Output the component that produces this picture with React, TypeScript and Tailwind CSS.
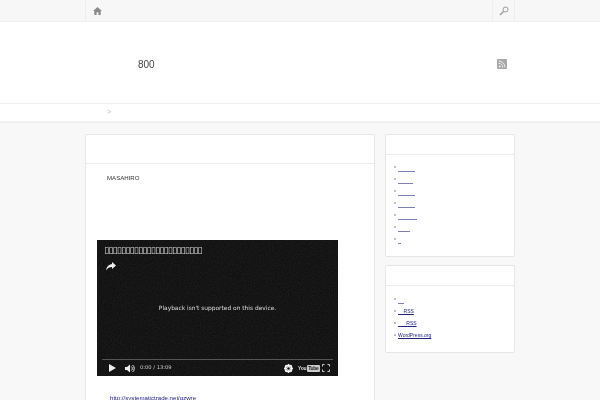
import React from "react";

const Blank = ({ w }: { w: number }) => (
  <a className="inline-block h-[9px] border-b border-[#8080b0]" style={{ width: w }} />
);

const Bullet = () => <span className="mr-[2px] mb-[4px] inline-block h-[2px] w-[2px] rounded-full bg-[#aaa]" />;

export default function App() {
  return (
    <div className="h-[400px] w-[600px] overflow-hidden bg-[#f8f8f8] font-['Liberation_Sans',Arial,sans-serif] text-[#333] blur-[0.3px]">
      <div className="h-[22px] border-b border-[#efefef] bg-[#f7f7f7]">
        <div className="mx-[85px] flex h-[21px] items-center justify-between border-l border-[#eeeeee]">
          <div className="flex w-[22px] justify-center">
            <svg width="9" height="8" viewBox="0 0 10 9" fill="#8a8a8a">
              <path d="M5 0 L10 4.5 L8.6 4.5 L8.6 9 L6 9 L6 6 L4 6 L4 9 L1.4 9 L1.4 4.5 L0 4.5 Z" />
            </svg>
          </div>
          <div className="flex h-full w-[23px] items-center justify-center border-x border-[#eeeeee]">
            <svg width="10" height="10" viewBox="0 0 10 10" fill="none" stroke="#9a9a9a">
              <circle cx="6.5" cy="3.5" r="2.5" strokeWidth="1" />
              <path d="M4.5 5.5 L1 9" strokeWidth="1.4" />
            </svg>
          </div>
        </div>
      </div>

      <header className="flex h-[81px] items-center justify-between bg-white pl-[138px] pr-[93px] pt-[3px]">
        <span className="text-[10px] text-[#444]">800</span>
        <svg width="10" height="10" viewBox="0 0 10 10">
          <rect width="10" height="10" rx="1" fill="#a8a8a8" />
          <circle cx="2.6" cy="7.4" r="1" fill="#eee" />
          <path d="M1.6 4.2 A4.2 4.2 0 0 1 5.8 8.4 M1.6 2 A6.4 6.4 0 0 1 8 8.4" stroke="#eee" strokeWidth="1" fill="none" />
        </svg>
      </header>

      <nav className="flex h-[19px] items-center border-y border-[#f1f1f1] bg-white pl-[107px] text-[7px] text-[#bbb]">
        &gt;
      </nav>

      <div className="flex items-start gap-[10px] border-t border-[#f0f0f0] px-[85px] pt-[11px]">
        <main className="h-[300px] w-[290px] shrink-0 rounded-t-[2px] border border-[#e6e6e6] bg-white">
          <div className="h-[29px] border-b border-[#eeeeee]" />
          <div className="px-[11px]">
            <p className="pl-[10px] pt-[10px] text-[6.1px] leading-[8px] text-[#333]">MASAHIRO</p>
            <div className="relative mt-[58px] h-[136px] w-[241px] overflow-hidden bg-[#111111] text-white">
              <svg className="absolute inset-0 opacity-[0.07]" width="242" height="136">
                <filter id="grain">
                  <feTurbulence type="fractalNoise" baseFrequency="0.9" numOctaves="2" />
                  <feColorMatrix values="0 0 0 0 1  0 0 0 0 1  0 0 0 0 1  0 0 0 1.4 -0.45" />
                </filter>
                <rect width="242" height="136" filter="url(#grain)" />
              </svg>
              <div className="absolute left-[7px] top-[4px] font-['DejaVu_Sans',sans-serif] text-[9px] leading-[12px] tracking-[-0.7px] text-[#ddd]">
                ▯▯▯▯▯▯▯▯▯▯▯▯▯▯▯▯▯▯▯▯▯▯▯
              </div>
              <svg className="absolute left-[9px] top-[22px]" width="10" height="9" viewBox="0 0 10 9" fill="#eee">
                <path d="M6 0 L10 3.6 L6 7 L6 5 C3.5 5 1.5 6 0 8.5 C0.5 5 2.5 2.4 6 2 Z" />
              </svg>
              <div className="absolute left-0 right-0 top-[63px] text-center font-['DejaVu_Sans',sans-serif] text-[5.9px] leading-[10px] text-[#ddd]">
                Playback isn't supported on this device.
              </div>
              <div className="absolute bottom-[16px] left-[5px] right-[5px] h-px bg-[#555]" />
              <div className="absolute bottom-0 left-0 right-0 flex h-[16px] items-center pl-[12px] pr-[8px]">
                <svg width="7" height="8" viewBox="0 0 7 8" fill="#eee"><path d="M0 0 L7 4 L0 8 Z" /></svg>
                <svg className="ml-[9px]" width="10" height="9" viewBox="0 0 10 9" fill="#eee">
                  <path d="M0 3 H2 L5 0.5 V8.5 L2 6 H0 Z" />
                  <path d="M6.3 2.5 A2.5 2.5 0 0 1 6.3 6.5 M7.6 1 A4.5 4.5 0 0 1 7.6 8" stroke="#eee" fill="none" />
                </svg>
                <span className="ml-[5px] font-['DejaVu_Sans',sans-serif] text-[5.2px] text-[#ccc]">0:00 / 13:09</span>
                <svg className="ml-auto" width="9" height="9" viewBox="0 0 9 9">
                  <circle cx="4.5" cy="4.5" r="3.1" fill="none" stroke="#eee" strokeWidth="2" />
                  <path d="M4.5 0 V9 M0 4.5 H9 M1.3 1.3 L7.7 7.7 M7.7 1.3 L1.3 7.7" stroke="#eee" strokeWidth="1" />
                  <circle cx="4.5" cy="4.5" r="1.2" fill="#111111" />
                </svg>
                <span className="ml-[5px] flex w-[18px] items-center text-[5px] font-bold leading-[7px] tracking-[-0.3px] text-[#ddd]">
                  You
                  <span className="ml-px rounded-[1px] bg-[#ccc] px-px text-[#222]">Tube</span>
                </span>
                <svg className="ml-[6px]" width="8" height="8" viewBox="0 0 8 8" fill="none" stroke="#ccc">
                  <path d="M0.5 2.5 V0.5 H2.5 M5.5 0.5 H7.5 V2.5 M7.5 5.5 V7.5 H5.5 M2.5 7.5 H0.5 V5.5" />
                </svg>
              </div>
            </div>
            <a className="mt-[19px] block pl-[13px] text-[6.1px] leading-[6px] text-[#22227f] underline">
              http://systematictrade.net/qzwre
            </a>
          </div>
        </main>

        <aside className="flex w-[130px] shrink-0 flex-col gap-[8px]">
          <section className="h-[123px] rounded-[2px] border border-[#e6e6e6] bg-white">
            <div className="h-[20px] border-b border-[#eeeeee]" />
            <ul className="flex flex-col gap-[3px] pl-[8px] pt-[8px]">
              {[17, 15, 17, 17, 19, 12, 3].map((w, i) => (
                <li key={i} className="flex h-[9px] items-end">
                  <Bullet />
                  <Blank w={w} />
                </li>
              ))}
            </ul>
          </section>
          <section className="h-[88px] rounded-[2px] border border-[#e6e6e6] bg-white">
            <div className="h-[20px] border-b border-[#eeeeee]" />
            <ul className="flex flex-col gap-[3px] pl-[8px] pt-[9px] text-[5px] leading-[9px] text-[#22227f]">
              <li className="flex h-[9px] items-end">
                <Bullet />
                <Blank w={6} />
              </li>
              <li className="flex h-[9px] items-end">
                <Bullet />
                <a className="underline">&nbsp;&nbsp;&nbsp;&nbsp;RSS</a>
              </li>
              <li className="flex h-[9px] items-end">
                <Bullet />
                <a className="underline">&nbsp;&nbsp;&nbsp;&nbsp;&nbsp;&nbsp;RSS</a>
              </li>
              <li className="flex h-[9px] items-end">
                <Bullet />
                <a className="underline">WordPress.org</a>
              </li>
            </ul>
          </section>
        </aside>
      </div>
    </div>
  );
}
